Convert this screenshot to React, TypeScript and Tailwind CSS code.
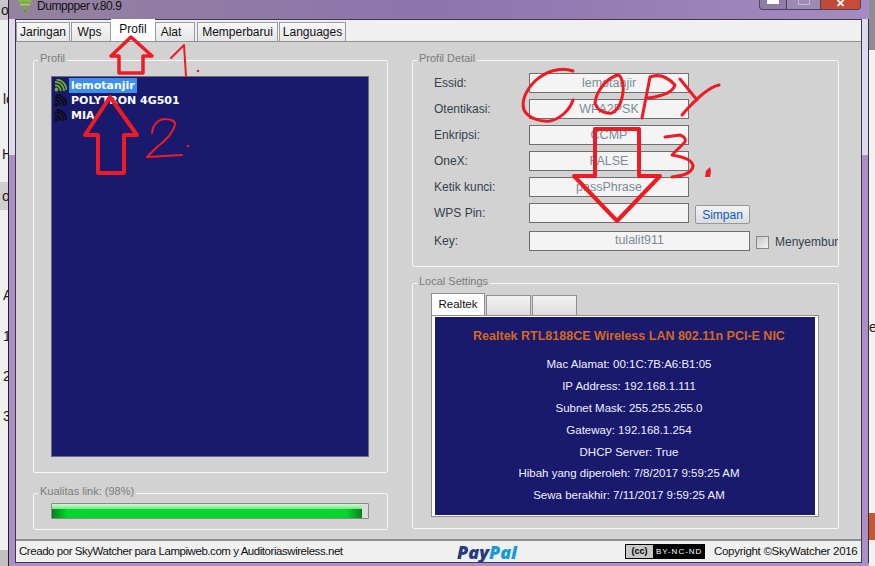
import type { ReactNode } from 'react';

function GroupBox({ title, className, children }: { title: string; className: string; children: ReactNode }) {
    return (
        <div className={`relative rounded-[2px] border border-[#f4f6f8] ${className}`}>
            <span className="absolute left-[4px] top-[-11px] bg-[#d2d2d2] px-[2px] text-[11px] leading-[16px] text-[#7c7c7c]">{title}</span>
            {children}
        </div>
    );
}

function TopTab({ label, className, active }: { label: string; className: string; active?: boolean }) {
    if (active) {
        return (
            <div className={`z-10 mt-[-2px] flex h-[22px] items-start justify-center bg-white pt-[2px] text-[12px] leading-[16px] text-[#111] ${className}`}>
                {label}
            </div>
        );
    }
    return (
        <div className={`flex h-[19px] items-center justify-center border border-b-0 border-[#9a9aa2] bg-gradient-to-b from-[#f8f8f8] to-[#e6e6e6] text-[12px] text-[#111] ${className}`}>
            {label}
        </div>
    );
}

function WifiIcon({ green }: { green?: boolean }) {
    const color = green ? '#6fae1e' : '#0c0c0c';
    return (
        <svg width="13" height="13" viewBox="0 0 13 13" fill="none" stroke={color} strokeWidth="1.9" className="shrink-0">
            <circle cx="2.5" cy="10.5" r="1.9" fill={color} stroke="none" />
            <path d="M1 6.2a5.8 5.8 0 0 1 5.8 5.8" />
            <path d="M1 3a9 9 0 0 1 9 9" />
            <path d="M2.500 .6a10.500 10.500 0 0 1 10 10.500" />
        </svg>
    );
}

function NetworkRow({ name, selected }: { name: string; selected?: boolean }) {
    return (
        <div className="flex h-[15px] items-center gap-[2px]">
            <WifiIcon green={selected} />
            <span className={`px-[2px] font-['DejaVu_Sans',sans-serif] text-[11px] font-bold leading-[15px] text-white ${selected ? 'bg-[#3c8fee]' : ''}`}>{name}</span>
        </div>
    );
}

function DetailRow({ label, value, wide }: { label: string; value: string; wide?: boolean }) {
    return (
        <div className="flex h-[20px] items-center">
            <span className="w-[95px] shrink-0 text-[12px] text-[#34424e]">{label}</span>
            <div className={`flex h-[20px] items-center justify-center border border-[#6f6f6f] bg-[#f4f4f4] text-[12.5px] text-[#7c8a99] ${wide ? 'w-[221px]' : 'w-[160px]'}`}>
                {value}
            </div>
        </div>
    );
}

function Annotations() {
    return (
        <svg width="875" height="566" className="pointer-events-none absolute left-0 top-0 z-20" fill="none" stroke="#ed1c24" strokeLinejoin="round" strokeLinecap="round">
            <g strokeWidth="3.5">
                <path d="M131 37L111 56H119V73H143V56H152Z" />
                <path d="M110 97L85 135H98V173H124V135H137Z" strokeWidth="4" />
                <path d="M595 129H639V176H660L617 221L574 176H595Z" strokeWidth="4" />
            </g>
            <g strokeWidth="2">
                <path d="M171 58L184 45L186 76" />
                <path d="M152 133Q153 122 163 119Q176 119 175 125Q172 136 157 147L147 157L182 155" />
                <path d="M573 71C560 66 545 72 535 81C526 90 521 101 524 110C528 118 540 122 550 121C560 119 570 110 573 100" strokeWidth="3" />
                <path d="M618 75C606 78 596 92 595 103C597 111 606 114 612 113C620 109 624 96 623 85C622 78 620 74 616 75" strokeWidth="3" />
                <path d="M642 118L650 77Q663 72 675 85Q672 95 648 98" strokeWidth="3" />
                <path d="M680 79L697 100M719 85Q705 88 682 115" strokeWidth="3" />
                <path d="M665 137L680 135Q687 138 685 142L672 155Q692 158 693 166Q692 175 672 177" strokeWidth="3" />
            </g>
            <circle cx="198" cy="71" r="1.300" fill="#ed1c24" stroke="none" />
            <circle cx="188" cy="146" r="1.300" fill="#ed1c24" stroke="none" />
            <path d="M705 177L706 171L710 167L711 171L710 177Z" fill="#ed1c24" stroke="none" />
        </svg>
    );
}

function TitleBar() {
    return (
        <div className="flex h-[19px] items-start bg-gradient-to-r from-[#94829f] via-[#8c74ad] to-[#a48cc0]">
            <svg width="14" height="12" viewBox="0 0 14 12" className="ml-[9px] shrink-0" fill="none" strokeWidth="2">
                <path d="M0 1H14" stroke="#7fc02c" />
                <path d="M2 4.500H12" stroke="#9ad24a" />
                <path d="M4 8H10" stroke="#6fb020" />
                <path d="M6 11H8" stroke="#4f9a16" />
            </svg>
            <span className="ml-[5px] text-[12px] leading-[12px] tracking-[-0.45px] text-[#111]">Dumppper v.80.9</span>
            <div className="ml-auto mr-[8px] flex h-[10px]">
                <div className="flex w-[28px] justify-center rounded-bl-[4px] border border-t-0 border-[#4c4458] bg-[#8f7ca8]">
                    <div className="h-[4px] w-[12px] bg-white" />
                </div>
                <div className="flex w-[34px] justify-center border-b border-r border-[#4c4458] bg-[#9c8ab2]">
                    <div className="h-[5px] w-[12px] border-x border-b border-[#c6bad2]" />
                </div>
                <div className="flex w-[40px] justify-center rounded-br-[4px] border-b border-r border-[#4c4458] bg-gradient-to-r from-[#c04a38] to-[#cc4a34] text-[11px] font-bold leading-[7px] text-white">
                    ✕
                </div>
            </div>
        </div>
    );
}

function LeftPage() {
    return (
        <div className="flex h-full w-[8px] shrink-0 flex-col overflow-hidden whitespace-nowrap bg-[#eef0f0] text-[14px] leading-[16px] text-[#222]">
            <div className="h-[20px] bg-[#c8c6cc] pl-[1px] pt-[2px]">od</div>
            <div className="ml-[3px] mt-[71px]">lo</div>
            <div className="ml-[2px] mt-[39px]">H</div>
            <div className="mt-[20px] flex h-[28px] items-center bg-[#cfcfcf] pl-[2px]">o</div>
            <div className="ml-[3px] mt-[77px]">A</div>
            <div className="ml-[3px] mt-[25px]">1</div>
            <div className="ml-[3px] mt-[24px]">2</div>
            <div className="ml-[3px] mt-[24px]">3</div>
            <div className="mt-auto h-[16px] bg-[#c0c0c0]" />
        </div>
    );
}

function RightPage() {
    return (
        <div className="flex w-[6px] shrink-0 flex-col overflow-hidden bg-[#f2f2f2] text-[14px] leading-[16px] text-[#222]">
            <div className="h-[50px] bg-[#8e8c94]" />
            <div className="mt-[269px]">e</div>
            <div className="mt-[178px] h-[27px] bg-[#c8552c]" />
        </div>
    );
}

function Border() {
    return <div className="h-full w-[6px] shrink-0 bg-gradient-to-b from-[#e0d8ec] from-[25%] to-[#ab90c8] to-[25%]" />;
}

export default function App() {
    return (
        <div className="relative flex h-[566px] w-[875px] overflow-hidden font-['Liberation_Sans',sans-serif]">
            <LeftPage />
            <div className="w-[1px] shrink-0 bg-[#222]" />
            <div className="flex min-w-0 flex-1 flex-col bg-[#ab90c8]">
                <TitleBar />
                <div className="flex min-h-0 flex-1">
                    <Border />
                    <div className="flex min-w-0 flex-1 flex-col border border-[#3c3a46]">
                        <div className="flex h-[22px] shrink-0 items-end border-b border-[#8f8f96] bg-[#f0f0f0]">
                            <TopTab label="Jaringan" className="w-[54px]" />
                            <div className="w-[1px]" />
                            <TopTab label="Wps" className="w-[40px] pr-[3px]" />
                            <TopTab label="Profil" className="w-[44px]" active />
                            <TopTab label="Alat" className="w-[40px] pr-[8px]" />
                            <div className="w-[2px]" />
                            <TopTab label="Memperbarui" className="w-[81px]" />
                            <div className="w-[1px]" />
                            <TopTab label="Languages" className="w-[67px]" />
                        </div>
                        <div className="flex min-h-0 flex-1 gap-[24px] bg-[#d2d2d2] pl-[17px] pt-[18px]">
                            <div className="flex w-[355px] flex-col gap-[20px]">
                                <GroupBox title="Profil" className="h-[413px] pl-[17px] pt-[15px]">
                                    <div className="h-[381px] w-[318px] border border-[#6c6c80] bg-[#19196e] pl-[2px] pt-[1px]">
                                        <NetworkRow name="lemotanjir" selected />
                                        <NetworkRow name="POLYTRON 4G501" />
                                        <NetworkRow name="MIA" />
                                    </div>
                                </GroupBox>
                                <GroupBox title="Kualitas link: (98%)" className="h-[37px] pl-[17px] pt-[9px]">
                                    <div className="flex h-[16px] w-[318px] overflow-hidden rounded-[1px] border border-[#8a8a8a] bg-[#dcdcdc]">
                                        <div className="flex h-full w-[310px] flex-col">
                                            <div className="h-[5px] bg-gradient-to-b from-[#d0f8d0] to-[#70e880]" />
                                            <div className="flex-1 bg-[linear-gradient(90deg,#06801f,#00d62c_5%,#00d62c_95%,#06801f)]" />
                                        </div>
                                    </div>
                                </GroupBox>
                            </div>
                            <div className="flex w-[427px] flex-col gap-[16px]">
                                <GroupBox title="Profil Detail" className="h-[207px] pl-[21px] pt-[12px]">
                                    <div className="flex flex-col gap-[6px]">
                                        <DetailRow label="Essid:" value="lemotanjir" />
                                        <DetailRow label="Otentikasi:" value="WPA2PSK" />
                                        <DetailRow label="Enkripsi:" value="CCMP" />
                                        <DetailRow label="OneX:" value="FALSE" />
                                        <DetailRow label="Ketik kunci:" value="passPhrase" />
                                        <div className="flex items-start">
                                            <DetailRow label="WPS Pin:" value="" />
                                            <div className="ml-[6px] mt-[2px] flex h-[19px] w-[55px] items-center justify-center rounded-[2px] border border-[#8f9aa2] bg-gradient-to-b from-[#f4f4f4] to-[#dcdcdc] text-[12px] text-[#0a5cc8]">
                                                Simpan
                                            </div>
                                        </div>
                                        <div className="flex items-center">
                                            <DetailRow label="Key:" value="tulalit911" wide />
                                            <div className="ml-[6px] mt-[3px] h-[13px] w-[13px] shrink-0 border border-[#8a8a8a] bg-gradient-to-br from-[#c8c8c8] to-[#f4f4f4]" />
                                            <div className="ml-[6px] mt-[3px] w-[64px] overflow-hidden whitespace-nowrap text-[12px] text-[#34424e]">Menyembunyikan</div>
                                        </div>
                                    </div>
                                </GroupBox>
                                <GroupBox title="Local Settings" className="h-[246px] pl-[18px] pt-[9px]">
                                    <div className="flex h-[22px] items-end gap-[1px]">
                                        <div className="z-10 flex h-[22px] w-[54px] items-center justify-center border border-b-0 border-[#8f8f96] bg-white text-[11.5px] text-[#111]">Realtek</div>
                                        <div className="h-[20px] w-[45px] border border-b-0 border-[#8f8f96] bg-gradient-to-b from-[#f4f4f4] to-[#dcdcdc]" />
                                        <div className="h-[20px] w-[45px] border border-b-0 border-[#8f8f96] bg-gradient-to-b from-[#f4f4f4] to-[#dcdcdc]" />
                                    </div>
                                    <div className="w-[388px] border border-[#8f8f96] bg-white px-[3px] py-[1px]">
                                        <div className="flex h-[198px] flex-col items-center bg-[#19196e] pl-[8px] pt-[8px] text-[11.5px] leading-[22px] text-[#f0f0ff]">
                                            <div className="mb-[6px] text-[12.5px] font-bold text-[#d4681e]">Realtek RTL8188CE Wireless LAN 802.11n PCI-E NIC</div>
                                            <div>Mac Alamat: 00:1C:7B:A6:B1:05</div>
                                            <div>IP Address: 192.168.1.111</div>
                                            <div>Subnet Mask: 255.255.255.0</div>
                                            <div>Gateway: 192.168.1.254</div>
                                            <div>DHCP Server: True</div>
                                            <div className="mt-[-1px]">Hibah yang diperoleh: 7/8/2017 9:59:25 AM</div>
                                            <div>Sewa berakhir: 7/11/2017 9:59:25 AM</div>
                                        </div>
                                    </div>
                                </GroupBox>
                            </div>
                        </div>
                        <div className="flex h-[23px] shrink-0 items-center border-t-2 border-[#8f8f96] bg-[#f0f0f0] pl-[3px] text-[11.5px] text-[#111]">
                            <span className="w-[438px] shrink-0 whitespace-nowrap tracking-[-0.45px]">Creado por SkyWatcher para Lampiweb.com y Auditoriaswireless.net</span>
                            <span className="w-[168px] shrink-0 font-['Open_Sans',sans-serif] text-[18px] font-extrabold italic leading-[20px] text-[#253b80]">
                                Pay<span className="text-[#179bd7]">Pal</span>
                            </span>
                            <div className="flex h-[15px] w-[80px] shrink-0 items-center border border-black bg-black text-[8px] tracking-[1px] text-white">
                                <div className="flex h-full w-[27px] items-center justify-center bg-[#c8c8c8] text-[9px] font-bold tracking-normal text-black">(cc)</div>
                                <span className="ml-[3px] whitespace-nowrap">BY-NC-ND</span>
                            </div>
                            <span className="ml-[9px] whitespace-nowrap tracking-[-0.3px]">Copyright ©SkyWatcher 2016</span>
                        </div>
                    </div>
                    <Border />
                    <div className="w-[1px] shrink-0 bg-[#333]" />
                </div>
                <div className="h-[3px] shrink-0" />
            </div>
            <RightPage />
            <Annotations />
        </div>
    );
}
